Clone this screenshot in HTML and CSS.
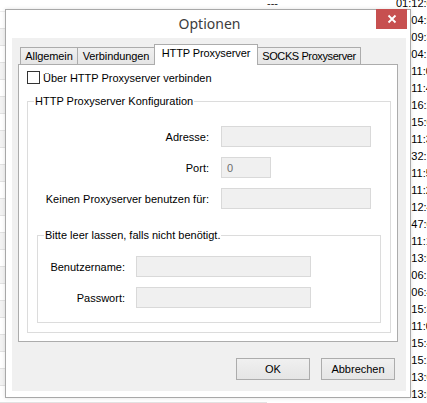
FILE: index.html
```html
<!DOCTYPE html>
<html lang="de">
<head>
  <meta charset="UTF-8" />
  <title>Optionen</title>
  <link rel="stylesheet" href="styles.css">
</head>
<body>
  <!-- list window behind the dialog -->
  <div class="bg-list">
    <div class="bg-row"><span class="bg-lead"></span><span class="bg-mid">---</span><span class="bg-time">01:12:08</span></div>
    <div class="bg-row"><span class="bg-lead"></span><span class="bg-mid"></span><span class="bg-time">01:04:51</span></div>
    <div class="bg-row"><span class="bg-lead"></span><span class="bg-mid"></span><span class="bg-time">01:09:33</span></div>
    <div class="bg-row"><span class="bg-lead"></span><span class="bg-mid"></span><span class="bg-time">01:04:17</span></div>
    <div class="bg-row"><span class="bg-lead"></span><span class="bg-mid"></span><span class="bg-time">01:11:02</span></div>
    <div class="bg-row"><span class="bg-lead"></span><span class="bg-mid"></span><span class="bg-time">01:11:45</span></div>
    <div class="bg-row"><span class="bg-lead"></span><span class="bg-mid"></span><span class="bg-time">01:16:20</span></div>
    <div class="bg-row"><span class="bg-lead"></span><span class="bg-mid"></span><span class="bg-time">01:15:09</span></div>
    <div class="bg-row"><span class="bg-lead"></span><span class="bg-mid"></span><span class="bg-time">01:11:38</span></div>
    <div class="bg-row"><span class="bg-lead"></span><span class="bg-mid"></span><span class="bg-time">00:32:14</span></div>
    <div class="bg-row"><span class="bg-lead"></span><span class="bg-mid"></span><span class="bg-time">01:11:56</span></div>
    <div class="bg-row"><span class="bg-lead"></span><span class="bg-mid"></span><span class="bg-time">01:11:27</span></div>
    <div class="bg-row"><span class="bg-lead"></span><span class="bg-mid"></span><span class="bg-time">01:12:40</span></div>
    <div class="bg-row"><span class="bg-lead"></span><span class="bg-mid"></span><span class="bg-time">00:47:03</span></div>
    <div class="bg-row"><span class="bg-lead"></span><span class="bg-mid"></span><span class="bg-time">01:11:19</span></div>
    <div class="bg-row"><span class="bg-lead"></span><span class="bg-mid"></span><span class="bg-time">01:13:52</span></div>
    <div class="bg-row"><span class="bg-lead"></span><span class="bg-mid"></span><span class="bg-time">01:06:11</span></div>
    <div class="bg-row"><span class="bg-lead"></span><span class="bg-mid"></span><span class="bg-time">01:06:48</span></div>
    <div class="bg-row"><span class="bg-lead"></span><span class="bg-mid"></span><span class="bg-time">01:15:30</span></div>
    <div class="bg-row"><span class="bg-lead"></span><span class="bg-mid"></span><span class="bg-time">01:11:07</span></div>
    <div class="bg-row"><span class="bg-lead"></span><span class="bg-mid"></span><span class="bg-time">01:15:44</span></div>
    <div class="bg-row"><span class="bg-lead"></span><span class="bg-mid"></span><span class="bg-time">01:15:21</span></div>
    <div class="bg-row"><span class="bg-lead"></span><span class="bg-mid"></span><span class="bg-time">01:13:05</span></div>
    <div class="bg-row"><span class="bg-lead"></span><span class="bg-mid"></span><span class="bg-time">01:13:59</span></div>
  </div>

  <!-- Optionen dialog -->
  <div class="dialog">
    <div class="titlebar">
      <span class="title">Optionen</span>
      <button class="close-btn" aria-label="Schließen">
        <svg width="10" height="10" viewBox="0 0 10 10"><path d="M1.5 1.5 L8.5 8.5 M8.5 1.5 L1.5 8.5" stroke="#fff" stroke-width="1.8" fill="none"/></svg>
      </button>
    </div>

    <div class="client">
      <div class="tabs">
        <div class="tab tab-general">Allgemein</div>
        <div class="tab tab-conn">Verbindungen</div>
        <div class="tab tab-http active">HTTP Proxyserver</div>
        <div class="tab tab-socks">SOCKS Proxyserver</div>
      </div>

      <div class="panel">
        <label class="check"><span class="check-box"></span>Über HTTP Proxyserver verbinden</label>

        <fieldset class="group group-main">
          <legend>HTTP Proxyserver Konfiguration</legend>
          <div class="group-body main-body">
            <div class="form form-main">
              <label>Adresse:</label>
              <input class="field field-wide" disabled>
              <label>Port:</label>
              <input class="field field-port" value="0" disabled>
              <label>Keinen Proxyserver benutzen für:</label>
              <input class="field field-wide" disabled>
            </div>

            <fieldset class="group group-auth">
              <legend>Bitte leer lassen, falls nicht benötigt.</legend>
              <div class="group-body auth-body">
                <div class="form form-auth">
                  <label>Benutzername:</label>
                  <input class="field" disabled>
                  <label>Passwort:</label>
                  <input class="field" type="password" disabled>
                </div>
              </div>
            </fieldset>
          </div>
        </fieldset>
      </div>

      <div class="buttons">
        <button class="btn">OK</button>
        <button class="btn">Abbrechen</button>
      </div>
    </div>
  </div>
</body>
</html>
```

FILE: styles.css
```css
* {
  box-sizing: border-box;
}

body {
  margin: 0;
  width: 427px;
  height: 403px;
  overflow: hidden;
  position: relative;
  background: #fff;
  font-family: 'Liberation Sans', Arial, sans-serif;
  font-size: 11px;
  color: #000;
}

/* background list window */
.bg-list {
  margin-top: -5px;
}

.bg-row {
  display: flex;
  height: 17px;
  line-height: 17px;
}

.bg-lead {
  width: 267px;
  background: #f3f3f3;
  border-bottom: 1px solid #e2e2e2;
}

.bg-row:nth-child(even) .bg-lead {
  background: #fff;
}

.bg-row:first-child .bg-lead {
  background: #fff;
  border-bottom-color: #ededed;
}

.bg-mid {
  width: 129px;
  color: #222;
}

.bg-time {
  flex: 1;
  white-space: nowrap;
  overflow: hidden;
}

/* dialog */
.dialog {
  position: absolute;
  left: 5px;
  top: 9px;
  width: 406px;
  height: 389px;
  background: #fff;
  border: 1px solid #a8a8a8;
  box-shadow: 0 0 4px rgba(0, 0, 0, 0.12);
  display: flex;
  flex-direction: column;
}

.titlebar {
  position: relative;
  height: 28px;
  display: flex;
  justify-content: center;
  align-items: center;
  padding-bottom: 2px;
}

.title {
  font-family: 'Noto Sans', 'Open Sans', sans-serif;
  font-size: 14px;
  color: #3c3c3c;
  margin-left: 3px;
}

.close-btn {
  position: absolute;
  top: -1px;
  right: 3px;
  width: 31px;
  height: 20px;
  border: none;
  padding: 0;
  background: #c75050;
  display: flex;
  align-items: center;
  justify-content: center;
}

.client {
  flex: 1;
  margin: 0 4px 6px 6px;
  padding: 6px 8px 0 6px;
  background: #f0f0f0;
  display: flex;
  flex-direction: column;
}

/* tabs */
.tabs {
  display: flex;
  align-items: flex-end;
  height: 20px;
  padding-left: 2px;
}

.tab {
  height: 17px;
  line-height: 16px;
  margin-left: -1px;
  border: 1px solid #acacac;
  border-bottom: none;
  background: linear-gradient(#f0f0f0, #e5e5e5);
  white-space: nowrap;
  text-align: center;
  letter-spacing: -0.1px;
}

.tab:first-child {
  margin-left: 0;
}

.tab-general { width: 58px; }
.tab-conn { width: 78px; }
.tab-http { width: 104px; }
.tab-socks { width: 104px; letter-spacing: -0.4px; }

.tab.active {
  position: relative;
  z-index: 1;
  height: 21px;
  line-height: 17px;
  margin-bottom: -1px;
  background: #fff;
}

.panel {
  width: 380px;
  background: #fff;
  border: 1px solid #acacac;
  padding: 6px 0 8px 8px;
}

.check {
  display: flex;
  align-items: center;
  height: 13px;
}

.check-box {
  width: 13px;
  height: 13px;
  border: 1px solid #333;
  background: #fff;
  margin-right: 3px;
}

/* group boxes */
.group {
  margin: 0;
  padding: 0;
  min-width: 0;
  border: 1px solid #dcdcdc;
}

.group legend {
  margin-left: 6px;
  padding: 0 1px;
  line-height: 14px;
}

.group-main {
  width: 364px;
  margin-top: 10px;
}

.main-body {
  padding: 18px 9px 9px;
}

.group-auth {
  width: 344px;
  margin-top: 19px;
}

.auth-body {
  padding: 14px 0;
}

.form {
  display: grid;
  row-gap: 10px;
  align-items: center;
}

.form label {
  text-align: right;
  white-space: nowrap;
}

.form-main {
  grid-template-columns: 172px 150px;
  column-gap: 12px;
}

.form-auth {
  grid-template-columns: 87px 175px;
  column-gap: 11px;
}

.field {
  height: 21px;
  width: 100%;
  margin: 0;
  padding: 0 5px;
  border: 1px solid #d9d9d9;
  background: #f0f0f0;
  font-family: inherit;
  font-size: 11px;
  color: #6d6d6d;
}

.field-port {
  width: 50px;
}

/* buttons */
.buttons {
  display: flex;
  justify-content: flex-end;
  gap: 11px;
  margin-top: 16px;
  padding-right: 3px;
}

.btn {
  width: 74px;
  height: 22px;
  padding: 0;
  border: 1px solid #acacac;
  background: linear-gradient(#f0f0f0, #e5e5e5);
  font-family: inherit;
  font-size: 11px;
  color: #000;
}
```
